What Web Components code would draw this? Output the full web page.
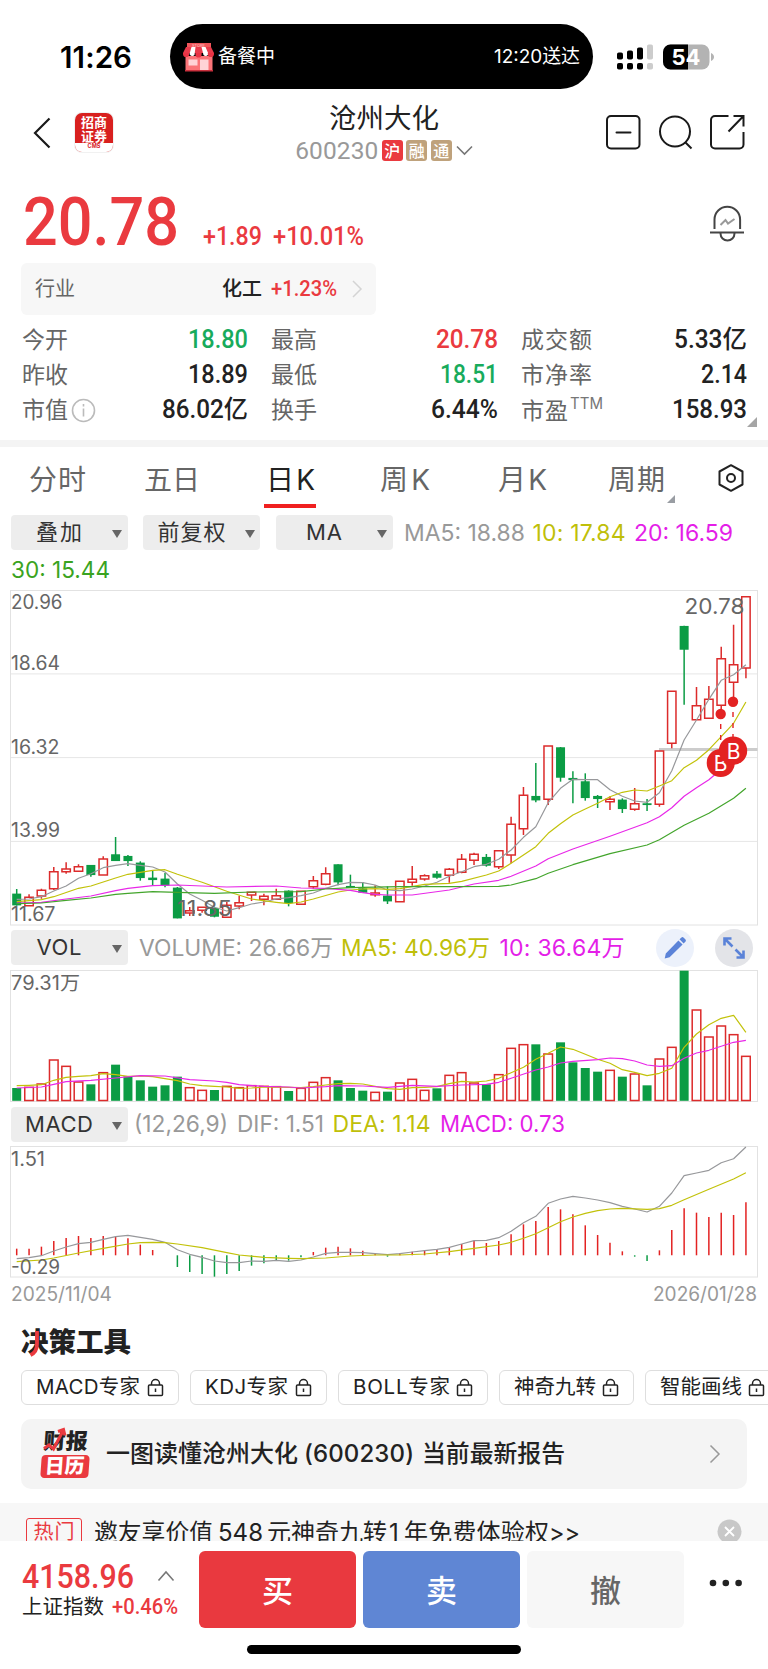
<!DOCTYPE html>
<html lang="zh-CN">
<head>
<meta charset="utf-8">
<title>沧州大化 600230</title>
<style>
    body {
        margin: 0;
        width: 768px;
        height: 1669px;
        overflow: hidden;
        background: #fff;
        color: #222;
        font-family: Inter, "Noto Sans CJK SC", sans-serif;
    }
</style>
</head>
<body>
<stock-app></stock-app>

<script>
const RED = '#ea3a3f';
const GREEN = '#18ab5c';
const UP = '#dc2b2b';
const DOWN = '#0b9c44';
const GREY_LINE = '#97989b';
const YELLOW = '#c2c20a';
const MAGENTA = '#e828e8';
const LEAF = '#43a52c';

class BaseElement extends HTMLElement {
    connectedCallback() {
        if (this.shadowRoot) return;
        this.attachShadow({ mode: 'open' });
        this.shadowRoot.innerHTML = `
            <style>
                * { box-sizing: border-box; }
                svg { display: block; flex: none; }
                .din { font-family: Roboto, "Noto Sans CJK SC", sans-serif; font-weight: 500; }
                ${this.css()}
            </style>
            ${this.html()}
        `;
    }
    css() { return ''; }
    html() { return ''; }
}

// time, live activity island, signal and battery
class StatusBar extends BaseElement {
    css() {
        return `
            :host { display: flex; align-items: center; height: 89px; padding: 24px 0 0 60px; }
            .island {
                display: flex; align-items: center; width: 423px; height: 65px; margin-left: 38px;
                padding: 0 13px; border-radius: 33px; background: #000; color: #fff;
            }
            .signal { margin-left: 23px; }
            .battery { margin-left: 10px; }
        `;
    }
    html() {
        return `
            <fit-text w="72" style="font-size:29.5px;font-weight:600;color:#000;margin-top:2px">11:26</fit-text>
            <div class="island">
                <svg width="31" height="30" viewBox="0 0 31 30">
                    <path d="M4 1h24v8H4z" fill="#f0565b"/>
                    <path d="M2.500 14h27v15h-27z" fill="#fb7478"/>
                    <path d="M3 5h25l3 6H0z" fill="#e83a4a"/>
                    <path d="M8.500 5h4l-1 8a3 3 0 0 1-5-1zM18.500 5h4l3 7a3 3 0 0 1-5 1z" fill="#fff"/>
                    <path d="M0 11h6.200v1a3.100 3.100 0 0 1-6.200 0zM12.400 11h6.200v1.500a3.100 3.100 0 0 1-6.200 0zM24.800 11h6.200v1a3.100 3.100 0 0 1-6.200 0z" fill="#e93244"/>
                    <path d="M5.500 17.500h9v6h-9zM17 17.500h8.500V28H17z" fill="#ffd3d6"/>
                    <path d="M2 28h28v1.500H2z" fill="#c9303d"/>
                    <text x="15.500" y="4.600" font-size="4" fill="#ffc4c6" text-anchor="middle" font-family="Inter">STORE</text>
                </svg>
                <fit-text w="57" style="font-size:19px;margin:1px 0 0 4px">备餐中</fit-text>
                <fit-text w="86" style="font-size:19px;margin:1px 0 0 auto">12:20送达</fit-text>
            </div>
            <svg class="signal" width="37" height="26" viewBox="0 0 37 26">
                <g fill="#000">
                    <rect x="1" y="8.500" width="6" height="7" rx="1.800"/>
                    <rect x="11" y="6.500" width="6" height="9" rx="1.800"/>
                    <rect x="21" y="3.500" width="6" height="12" rx="1.800"/>
                    <rect x="1" y="19" width="6" height="6.500" rx="1.800"/>
                    <rect x="11" y="19" width="6" height="6.500" rx="1.800"/>
                    <rect x="21" y="19" width="6" height="6.500" rx="1.800"/>
                </g>
                <g fill="#ccc">
                    <rect x="31" y="0.500" width="6" height="15" rx="1.800"/>
                    <rect x="31" y="19" width="6" height="6.500" rx="1.800"/>
                </g>
            </svg>
            <svg class="battery" width="52" height="26" viewBox="0 0 52 26">
                <rect y="0.500" width="46.500" height="25" rx="7.500" fill="#b3b3b3"/>
                <path d="M25 .5H7.500a7.500 7.500 0 0 0-7.500 7.500v10a7.500 7.500 0 0 0 7.500 7.500H25z" fill="#000"/>
                <path d="M48 9c4 1.500 4 6.500 0 8z" fill="#b3b3b3"/>
                <text x="23" y="20.700" text-anchor="middle" font-size="22" font-weight="700" fill="#fff" font-family="Inter">54</text>
            </svg>
        `;
    }
}

class NavHeader extends BaseElement {
    css() {
        return `
            :host { display: flex; align-items: center; height: 87px; padding: 0 23px 0 33px; }
            .logo {
                display: flex; flex-direction: column; align-items: center; width: 38px; height: 39px; margin-left: 24px;
                padding-top: 2px; border-radius: 7px; overflow: hidden; background: #d8201f; color: #fff;
                font: 700 13px/14px "Noto Sans CJK SC", sans-serif; box-shadow: 0 0 0 1px #f1f1f1;
            }
            .logo span { height: 14.500px; }
            .logo small { width: 38px; height: 10px; background: #fff; color: #d8201f; font: 700 5.500px/7px Inter, sans-serif; text-align: center; }
            .title { display: flex; flex-direction: column; align-items: center; width: 180px; margin-left: 181px; gap: 5px; }
            .code { display: flex; align-items: center; height: 22px; }
            .badge { width: 21px; height: 21px; margin-left: 3.500px; border-radius: 3px; color: #fff; font: 500 16px/21px "Noto Sans CJK SC", sans-serif; text-align: center; }
            .tools { display: flex; gap: 17.500px; margin-left: auto; }
        `;
    }
    html() {
        return `
            <svg width="18" height="32" viewBox="0 0 18 32" fill="none" stroke="#1a1a1a" stroke-width="2.200"><path d="M16.500 1.500 2 16l14.500 14.500"/></svg>
            <div class="logo"><span>招商</span><span>证券</span><small>CMS</small></div>
            <div class="title">
                <fit-text w="110" style="font-size:27.500px">沧州大化</fit-text>
                <div class="code">
                    <fit-text class="din" w="83" style="font-size:24.500px;color:#999;font-weight:400">600230</fit-text>
                    <span class="badge" style="background:${RED}">沪</span>
                    <span class="badge" style="background:#bfa27c">融</span>
                    <span class="badge" style="background:#bfa27c">通</span>
                    <svg width="17" height="11" viewBox="0 0 17 11" fill="none" stroke="#777" stroke-width="1.600" style="margin-left:4px"><path d="m1 1.500 7.500 7.500L16 1.500"/></svg>
                </div>
            </div>
            <div class="tools">
                <svg width="35" height="35" viewBox="0 0 35 35" fill="none" stroke="#1a1a1a" stroke-width="2"><rect x="1" y="1" width="32.500" height="32.500" rx="4"/><path d="M10.500 17.500h14" stroke-linecap="round"/></svg>
                <svg width="34" height="35" viewBox="0 0 34 35" fill="none" stroke="#1a1a1a" stroke-width="2"><circle cx="16" cy="16.500" r="15"/><path d="m26 27 6.500 6.500"/></svg>
                <svg width="35" height="35" viewBox="0 0 35 35" fill="none" stroke="#1a1a1a" stroke-width="2"><path d="M18.500 1H5a4 4 0 0 0-4 4v24.500a4 4 0 0 0 4 4h24.500a4 4 0 0 0 4-4V17"/><path d="M23.500 1h10v10.500M33 1.500 18.500 16.500"/></svg>
            </div>
        `;
    }
}

class PriceHead extends BaseElement {
    css() {
        return `
            :host { display: block; padding: 9px 23px 0 23px; height: 138px; color: ${RED}; }
            .price { display: flex; align-items: baseline; height: 77.500px; }
            .price svg { align-self: flex-start; margin: 20px 0 0 auto; }
            .industry { display: flex; align-items: center; width: 355px; height: 52px; margin-left: -2px; padding: 1px 13px 0 14px; border-radius: 6px; background: #f7f7f7; }
        `;
    }
    html() {
        return `
            <div class="price din">
                <fit-text w="156" style="font-size:66px">20.78</fit-text>
                <fit-text w="59" style="font-size:25px;margin-left:24px">+1.89</fit-text>
                <fit-text w="91" style="font-size:25px;margin-left:11px">+10.01%</fit-text>
                <svg width="36" height="37" viewBox="0 0 36 37" fill="none" stroke="#444" stroke-width="2">
                    <path d="M5.500 24V14.500a12.800 12.800 0 0 1 25.600 0V24M1 27.500h34M11.500 28.500a7 7 0 0 0 14 0"/>
                    <path d="m11.500 20 5-5 2.500 3.500L25.500 14" stroke="#999"/>
                </svg>
            </div>
            <div class="industry">
                <fit-text w="40" style="font-size:20px;color:#666">行业</fit-text>
                <fit-text w="40" style="font-size:20px;color:#222;margin-left:auto;font-weight:500">化工</fit-text>
                <fit-text class="din" w="66" style="font-size:22px;margin-left:9px">+1.23%</fit-text>
                <svg width="11" height="18" viewBox="0 0 11 18" fill="none" stroke="#d4d4d4" stroke-width="1.500" style="margin-left:15px"><path d="m1 1 8 8-8 8"/></svg>
            </div>
        `;
    }
}

class QuoteStats extends BaseElement {
    css() {
        return `
            :host { display: grid; grid-template-columns: 226px 227px 226px; grid-auto-rows: 35px; column-gap: 23px;
                box-sizing: border-box; padding: 8.500px 0 0 22px; height: 126px; }
            .cell { display: flex; align-items: center; position: relative; }
            .val { margin-left: auto; }
            sup { position: absolute; left: 49px; top: 1px; font-size: 16px; line-height: 16px; color: #777; }
            .corner { position: absolute; right: -10px; bottom: 1px; border: 5px solid #a5a5a5; border-left-color: transparent; border-top-color: transparent; }
        `;
    }
    html() {
        const info = '<svg width="25" height="25" viewBox="0 0 25 25" fill="none" stroke="#bbb" stroke-width="1.600" style="margin-left:3px"><circle cx="12.500" cy="12.500" r="11"/><path d="M12.500 10.500v8M12.500 6v2.500"/></svg>';
        const rows = [
            ['今开', 46, '18.80', 60, GREEN], ['最高', 46, '20.78', 62, RED], ['成交额', 71, '5.33亿', 73],
            ['昨收', 46, '18.89', 60], ['最低', 46, '18.51', 58, GREEN], ['市净率', 71, '2.14', 46],
            ['市值', 46, '86.02亿', 86, '', info], ['换手', 46, '6.44%', 67], ['市盈', 47, '158.93', 75, '', '<sup><fit-text w="33">TTM</fit-text></sup><i class="corner"></i>']
        ];
        return rows.map(([label, lw, value, vw, color, extra]) => `
            <div class="cell">
                <fit-text w="${lw}" style="font-size:23px;color:#666;${label === '市盈' ? 'margin-top:3px' : ''}">${label}</fit-text>${extra || ''}
                <fit-text class="din val" w="${vw}" style="font-size:25px;color:${color || '#222'}">${value}</fit-text>
            </div>`).join('');
    }
}

class PeriodTabs extends BaseElement {
    css() {
        return `
            :host { display: flex; align-items: center; height: 71px; padding-left: 29px; border-top: 7px solid #f4f4f4; color: #666; box-sizing: border-box; }
            .tab { display: flex; align-items: center; position: relative; height: 64px; padding-top: 2px; font-size: 28px; }
            .tab.on { color: #222; }
            .tab.on::after { content: ""; position: absolute; left: -2px; right: -1px; bottom: 3px; height: 4px; background: #f02020; }
            .corner { position: absolute; right: -10px; bottom: 8px; border: 4px solid #999da3; border-left-color: transparent; border-top-color: transparent; }
        `;
    }
    html() {
        const tabs = [['分时', 57, 0], ['五日', 56, 58], ['日K', 49, 66], ['周K', 50, 65], ['月K', 49, 68], ['周期', 57, 61]];
        return tabs.map(([label, w, gap], i) => `
            <span class="tab ${i === 2 ? 'on' : ''}" style="margin-left:${gap}px">
                <fit-text w="${w}">${label}</fit-text>${i === 5 ? '<i class="corner"></i>' : ''}
            </span>`).join('') + `
            <svg width="26" height="28" viewBox="0 0 26 28" fill="none" stroke="#222" stroke-width="2" style="margin:-3px 0 0 53px">
                <path d="M13 1.200 24.500 7.500v13L13 26.800 1.500 20.500v-13z" stroke-linejoin="round"/><circle cx="13" cy="14" r="4"/>
            </svg>`;
    }
}

class DropButton extends BaseElement {
    css() {
        return `
            :host { display: flex; align-items: center; justify-content: center; position: relative; flex: none;
                width: 117px; height: 35px; padding: 1px 20px 0 0; box-sizing: border-box; border-radius: 4px;
                background: #ededed; color: #333; font-size: 22px; }
            i { position: absolute; right: 5.500px; top: 15px; border: 5.500px solid transparent; border-top: 8px solid #666; border-bottom: 0; }
        `;
    }
    html() { return '<slot></slot><i></i>'; }
}

// drop button(s) followed by coloured values
class IndicatorRow extends BaseElement {
    css() {
        return `
            :host { display: flex; align-items: center; height: 35px; padding-left: 10.500px; font-size: 23px; }
        `;
    }
    html() { return '<slot></slot>'; }
}

const STEP = 12.36;
const xAt = i => 16.7 + i * STEP;

// [index, value] pairs to a polyline, value -> y by the chart's own scale
const line = (pts, y, color) =>
    `<polyline fill="none" stroke="${color}" stroke-width="1.200" stroke-linejoin="round" points="${pts.map(([i, v]) => xAt(i).toFixed(1) + ',' + y(v).toFixed(1)).join(' ')}"/>`;

const dense = values => values.map((v, i) => [i, v]);

// direction, high, body top, body bottom, low
const CANDLES = [
    ['G',927,942,975,977],['R',943,952,977,979],['R',926,931,948,956],['R',861,875,926,930],['R',847,867,875,881],
    ['R',853,860,874,875],['G',855,856,884,890],['R',829,837,885,887],['G',771,824,842,843],['G',825,829,842,858],
    ['G',844,849,893,902],['G',872,894,899,915],['G',879,897,916,922],['G',921,924,1014,1015],['R',981,992,999,1008],
    ['R',980,982,991,998],['G',982,985,1009,1012],['R',966,976,1012,1014],['R',947,968,978,988],['R',935,937,945,963],
    ['R',941,949,958,976],['R',926,947,958,960],['G',931,933,968,979],['R',933,934,973,974],['R',888,902,920,926],
    ['R',862,881,913,916],['G',853,854,906,916],['G',884,919,923,924],['G',906,926,937,938],['R',916,939,944,950],
    ['G',919,948,963,972],['R',903,904,965,966],['R',858,898,907,917],['R',883,887,897,902],['G',873,882,892,896],
    ['R',864,868,886,908],['R',822,838,877,880],['R',818,823,841,855],['G',822,832,856,860],['R',811,812,860,867],
    ['R',710,733,825,850],['R',621,646,746,765],['G',549,649,660,667],['R',496,498,658,675],['G',501,503,592,605],
    ['G',574,595,599,670],['G',580,605,653,662],['G',645,649,656,684],['R',649,658,665,690],['G',655,660,686,699],
    ['R',624,671,688,692],['G',657,671,674,693],['R',511,513,673,680],['R',332,334,490,505],['G',137,139,208,374],
    ['R',321,377,419,420],['R',318,358,415,416],['R',200,236,376,395],['R',134,254,307,355],['R',48,50,264,295]
];

class KlineChart extends BaseElement {
    css() { return ':host { display: block; height: 345px; }'; }
    html() {
        const y = v => 580 + v / 3;
        const ma5 = dense([958,957,950,933,918,895,881,863,856,851,856,861,876,912,942,961,982,993,983,972,966,957,953,947,939,925,914,907,908,915,930,932,927,918,907,889,875,860,853,838,810,772,740,668,625,598,599,599,629,649,663,667,638,572,480,420,358,301,284,254]);
        const ma10 = [[0,965],[2,959],[3,950],[5,925],[6,918],[8,894],[9,883],[10,877],[11,871],[12,869],[13,883],[15,907],[17,934],[19,957],[21,967],[22,971],[23,966],[24,957],[26,936],[27,930],[28,927],[29,926],[30,928],[31,926],[33,913],[35,910],[36,904],[38,885],[39,873],[40,850],[42,800],[43,760],[44,731],[45,705],[46,687],[47,670],[48,650],[49,637],[50,630],[51,633],[52,618],[53,602],[54,563],[55,541],[56,509],[57,470],[58,430],[59,366]];
        const ma20 = [[0,969],[2,967],[4,957],[6,948],[8,932],[9,925],[11,917],[13,915],[17,921],[21,918],[23,924],[25,925],[27,931],[28,938],[29,943],[30,945],[32,945],[35,930],[37,912],[39,901],[40,889],[42,858],[43,836],[45,807],[48,769],[51,728],[52,710],[53,683],[54,649],[55,623],[56,599],[57,568],[58,530]];
        const ma30 = [[0,971],[2,969],[4,961],[6,954],[8,943],[9,940],[11,935],[13,937],[16,940],[19,936],[23,935],[25,927],[27,923],[31,920],[35,920],[39,919],[40,915],[42,896],[43,880],[45,854],[48,821],[51,795],[52,779],[54,736],[56,700],[58,655],[59,625]];
        const candles = CANDLES.map(([dir, hi, top, bottom, lo], i) => {
            const x = xAt(i);
            const t = y(top), b = y(bottom);
            if (dir === 'G') {
                return `<path d="M${x} ${y(hi)}V${y(lo)}" stroke="${DOWN}" stroke-width="1.500"/><rect x="${x - 4.5}" y="${t - .4}" width="9" height="${b - t + .8}" fill="${DOWN}"/>`;
            }
            return `<path d="M${x} ${y(hi)}V${t}M${x} ${b}V${y(lo)}M${x - 4.2} ${t}h8.400V${b}h-8.400z" fill="none" stroke="${UP}" stroke-width="1.500"/>`;
        }).join('');
        const labels = [['20.96', 609, 51.5], ['18.64', 670, 49], ['16.32', 754, 48.5], ['13.99', 837.3, 49], ['11.67', 921.3, 44.5]];
        return `
            <svg width="768" height="345" viewBox="0 585 768 345" font-family="Inter, sans-serif">
                <path d="M10.500 673.900H757.500M10.500 757.600H757.500M10.500 841.400H757.500" stroke="#e6e6e6"/>
                <rect x="10.500" y="590.500" width="747" height="334.500" fill="none" stroke="#e2e2e2"/>
                <path d="M659 749.500H757.500" stroke="#ccc" stroke-width="2.800"/>
                ${candles}
                ${line(ma5, y, GREY_LINE)}${line(ma10, y, YELLOW)}${line(ma20, y, MAGENTA)}${line(ma30, y, LEAF)}
                ${labels.map(([t, ly, w]) => `<text x="11" y="${ly}" font-size="19.500" fill="#666" textLength="${w}" lengthAdjust="spacingAndGlyphs">${t}</text>`).join('')}
                <text x="177" y="915.700" font-size="21.500" fill="#666" textLength="55" lengthAdjust="spacingAndGlyphs">11.85</text>
                <text x="684.500" y="614.400" font-size="21.500" fill="#666" textLength="60" lengthAdjust="spacingAndGlyphs">20.78</text>
                <g stroke="#e32222" stroke-width="1.400" stroke-dasharray="5 6">
                    <path d="M720.700 724V748M733 712V740"/>
                </g>
                <g fill="#e32222">
                    <circle cx="720.700" cy="714" r="5.200"/><circle cx="733" cy="701.800" r="5.200"/>
                    <circle cx="720.700" cy="763" r="14"/>
                    <text x="720.700" y="771" text-anchor="middle" font-size="21" fill="#fff">B</text>
                    <circle cx="733" cy="750.700" r="14.200"/>
                    <text x="733.500" y="758.700" text-anchor="middle" font-size="21" fill="#fff">B</text>
                </g>
            </svg>
        `;
    }
}

class VolumeChart extends BaseElement {
    css() { return ':host { display: block; height: 142px; }'; }
    html() {
        const y = v => 925 + v / 3;
        const tops = [489,487,477,405,424,471,478,443,419,454,466,485,481,455,488,496,495,484,488,482,484,485,498,490,472,458,466,489,497,502,500,474,463,496,490,451,443,474,478,449,370,359,358,387,352,412,429,440,436,455,447,481,402,367,137,255,336,303,329,394];
        const ma5 = [[0,482],[1,481],[2,479],[3,466],[4,457],[5,454],[6,452],[7,446],[8,449],[9,454],[10,453],[11,455],[12,461],[13,467],[14,477],[15,482],[16,484],[17,486],[18,490],[19,489],[20,486],[22,487],[23,488],[24,485],[25,480],[26,476],[27,475],[28,477],[29,484],[30,491],[31,493],[32,488],[33,487],[34,485],[35,476],[36,469],[37,471],[38,468],[39,460],[40,443],[41,427],[42,403],[43,385],[44,366],[45,373],[46,388],[47,403],[48,415],[49,434],[50,442],[51,452],[52,445],[53,430],[54,367],[55,327],[56,299],[57,280],[58,271],[59,322]];
        const ma10 = [[0,489],[2,486],[3,478],[4,470],[6,466],[8,459],[10,452],[12,453],[14,464],[16,468],[17,472],[18,479],[20,484],[22,486],[23,489],[25,485],[26,482],[28,483],[30,487],[32,481],[34,484],[36,480],[38,478],[39,472],[40,460],[42,435],[43,426],[44,414],[45,409],[47,404],[48,399],[49,401],[50,408],[51,420],[52,424],[53,422],[54,400],[55,384],[56,376],[57,364],[58,352],[59,346]];
        const bars = tops.map((v, i) => {
            const x = xAt(i);
            return CANDLES[i][0] === 'G'
                ? `<rect x="${x - 4.5}" y="${y(v)}" width="9" height="${1100.8 - y(v)}" fill="${DOWN}"/>`
                : `<rect x="${x - 4.3}" y="${y(v)}" width="8.600" height="${1100.5 - y(v)}" fill="none" stroke="${UP}" stroke-width="1.500"/>`;
        }).join('');
        return `
            <svg width="768" height="142" viewBox="0 965 768 142" font-family="Inter, 'Noto Sans CJK SC', sans-serif">
                <rect x="10.500" y="970.500" width="747" height="131" fill="none" stroke="#e2e2e2"/>
                ${bars}${line(ma5, y, YELLOW)}${line(ma10, y, MAGENTA)}
                <text x="11" y="990" font-size="19.500" fill="#666" textLength="69" lengthAdjust="spacingAndGlyphs">79.31万</text>
            </svg>
        `;
    }
}

class MacdChart extends BaseElement {
    css() { return ':host { display: block; height: 139px; }'; }
    html() {
        const y = v => 1105 + v / 3;
        const tips = [431,431,425,408,399,393,399,393,396,400,419,435,451,486,501,507,515,507,498,482,475,466,467,457,441,428,425,430,437,444,455,445,440,435,432,426,417,408,414,408,388,358,348,306,313,328,361,390,413,439,455,468,436,375,310,323,336,323,330,292];
        const dif = dense([461,458,452,438,426,416,412,403,395,391,397,403,412,434,448,457,468,473,473,468,469,466,469,465,456,445,442,442,443,446,449,446,441,437,433,427,417,407,406,398,379,353,334,295,282,274,279,285,293,304,312,321,304,264,212,204,196,173,161,126]);
        const dea = [[0,470],[2,465],[3,459],[5,444],[7,430],[9,417],[10,413],[11,412],[12,413],[13,417],[15,428],[17,443],[18,450],[20,457],[22,460],[23,461],[25,459],[27,453],[29,450],[31,450],[33,447],[35,440],[37,430],[39,420],[40,412],[41,400],[42,386],[43,368],[44,350],[45,336],[46,325],[47,317],[48,312],[49,310],[51,313],[52,311],[53,301],[54,284],[56,253],[58,222],[59,203]];
        const bars = tips.map((v, i) => `<path d="M${xAt(i)} 1255.300V${y(v)}" stroke="${v > 451 ? DOWN : '#e32222'}" stroke-width="1.500"/>`).join('');
        return `
            <svg width="768" height="139" viewBox="0 1141 768 139" font-family="Inter, sans-serif">
                <rect x="10.500" y="1146.500" width="747" height="130.500" fill="none" stroke="#e2e2e2"/>
                ${bars}${line(dif, y, GREY_LINE)}${line(dea, y, YELLOW)}
                <text x="11" y="1165.800" font-size="19.500" fill="#666" textLength="34" lengthAdjust="spacingAndGlyphs">1.51</text>
                <text x="11" y="1274.200" font-size="19.500" fill="#666" textLength="49" lengthAdjust="spacingAndGlyphs">-0.29</text>
            </svg>
        `;
    }
}

class RoundTool extends BaseElement {
    css() {
        return `:host { display: flex; align-items: center; justify-content: center; flex: none; width: 38px; height: 38px; border-radius: 50%; }`;
    }
    html() {
        return this.getAttribute('kind') === 'pen'
            ? `<svg width="22" height="22" viewBox="0 0 22 22" fill="#5b83d8"><path d="m15.500 2.300 1.700-1.600a1.800 1.800 0 0 1 2.500 0l1.600 1.600a1.800 1.800 0 0 1 0 2.500l-1.700 1.700zM14.400 3.400l4.200 4.200L5.600 20.300l-4.900 1.200 1.100-5z"/></svg>`
            : `<svg width="24" height="24" viewBox="0 0 24 24" fill="none" stroke="#5b83d8" stroke-width="2.600"><path d="M2.500 9.500V2.500H9.500M3 3l7.500 7.500M21.500 14.500v7H14.500M21 21l-7.500-7.500"/></svg>`;
    }
}

class ToolChips extends BaseElement {
    css() {
        return `
            :host { display: block; height: 112px; padding-left: 21px; box-sizing: border-box; }
            h2 { position: relative; display: flex; align-items: center; margin: 0; height: 62.500px; padding-top: 10px; font-size: 27.500px; font-weight: 900; }
            h2 svg { position: absolute; left: 8px; top: 22px; }
            .row { display: flex; gap: 11px; width: 800px; }
            .chip { display: flex; align-items: center; justify-content: space-between; flex: none; height: 35px; padding: 0 14px; border: 1.500px solid #dedede; border-radius: 6px; font-size: 20.500px; }
        `;
    }
    html() {
        const chips = [['MACD专家', 158, 104], ['KDJ专家', 137, 83], ['BOLL专家', 150, 97], ['神奇九转', 135, 82], ['智能画线', 135, 82]];
        const lock = '<svg width="17" height="19" viewBox="0 0 17 19" fill="none" stroke="#222" stroke-width="1.500"><rect x="1.500" y="7" width="14" height="10.500" rx="1"/><path d="M4.500 7V5.500a4 4 0 0 1 8 0V7M8.500 10.500v3.500"/></svg>';
        return `
            <h2>
                <fit-text w="110">决策工具</fit-text>
                <svg width="16" height="29" viewBox="0 0 16 29" fill="none" stroke="${RED}" stroke-width="3.800"><path d="M8 2v13c0 6-2 9-6.500 11"/></svg>
            </h2>
            <div class="row">
                ${chips.map(([t, w, tw]) => `<span class="chip" style="width:${w}px"><fit-text w="${tw}">${t}</fit-text>${lock}</span>`).join('')}
            </div>
        `;
    }
}

class ReportCard extends BaseElement {
    css() {
        return `
            :host { display: flex; align-items: center; width: 726px; height: 69.500px; margin-left: 21px; padding: 0 26px 0 20px; box-sizing: border-box; border-radius: 10px; background: #f4f4f4; font-size: 24px; font-weight: 500; }
            .cal { position: relative; width: 51px; font-size: 22px; font-weight: 900; margin-right: 14px; line-height: 24px; }
            .cal div { transform: skewX(-4deg); height: 23px; display: flex; align-items: center; justify-content: center; }
            .cal .on { width: 48px; color: #fff; background: ${RED}; border-radius: 4px; margin-top: 2px; }
            .cal svg { position: absolute; left: 1px; top: -3px; }
        `;
    }
    html() {
        return `
            <div class="cal">
                <div><fit-text w="46">财报</fit-text></div>
                <div class="on"><fit-text w="41" style="font-size:20px">日历</fit-text></div>
                <svg width="25" height="25" viewBox="0 0 25 25" fill="none" stroke="${RED}" stroke-width="3"><path d="M2 21.500 7 18l4.500 4L21 4M16 4.500l5.500-2 1.500 6"/></svg>
            </div>
            <fit-text w="192">一图读懂沧州大化</fit-text>
            <fit-text w="110" style="margin-left:6px">(600230)</fit-text>
            <fit-text w="143" style="margin-left:8px">当前最新报告</fit-text>
            <svg width="12" height="20" viewBox="0 0 12 20" fill="none" stroke="#999" stroke-width="1.500" style="margin-left:auto"><path d="m1.500 1.500 8.500 8.500-8.500 8.500"/></svg>
        `;
    }
}

// promo strip, its lower part is cut by the trade bar
class PromoStrip extends BaseElement {
    css() {
        return `
            :host { display: flex; align-items: flex-start; height: 38.500px; margin-top: 14px; padding: 15.500px 26px 0 26px; box-sizing: border-box; overflow: hidden; background: #f7f7f7; }
            .tag { display: flex; align-items: center; justify-content: center; flex: none; width: 56px; height: 29px; border: 1.500px solid ${RED}; border-radius: 3px; color: ${RED}; font-size: 20px; }
            .msg { display: flex; align-items: center; height: 29px; margin-left: 12px; font-size: 24px; }
        `;
    }
    html() {
        return `
            <span class="tag"><fit-text w="41">热门</fit-text></span>
            <span class="msg">
                <fit-text w="119">邀友享价值</fit-text>
                <fit-text w="45" style="margin-left:5px">548</fit-text>
                <fit-text w="120" style="margin-left:4px">元神奇九转</fit-text>
                <fit-text w="12" style="margin-left:2px">1</fit-text>
                <fit-text w="145" style="margin-left:3px">年免费体验权</fit-text>
                <fit-text w="31">&gt;&gt;</fit-text>
            </span>
            <svg width="25" height="25" viewBox="0 0 25 25" style="margin:1px 0 0 auto"><circle cx="12.500" cy="12.500" r="12" fill="#c8c8c8"/><path d="m8 8 9 9m0-9-9 9" stroke="#fff" stroke-width="1.800"/></svg>
        `;
    }
}

class TradeBar extends BaseElement {
    css() {
        return `
            :host { display: block; height: 128px; background: #fff; }
            .row { display: flex; padding: 10px 25px 0 22px; }
            .index { width: 177px; padding-top: 5px; color: ${RED}; }
            .index div { display: flex; align-items: center; height: 41px; }
            .index div + div { height: 20px; }
            .btn { display: flex; align-items: center; justify-content: center; width: 157px; height: 77px; padding-bottom: 2px; margin-right: 7px; border-radius: 6px; color: #fff; font-size: 31px; font-weight: 500; }
            .home { width: 274px; height: 9px; margin: 17px auto 0; border-radius: 5px; background: #000; }
        `;
    }
    html() {
        return `
            <div class="row">
                <div class="index">
                    <div>
                        <fit-text class="din" w="112" style="font-size:34px">4158.96</fit-text>
                        <svg width="18" height="12" viewBox="0 0 18 12" fill="none" stroke="#777" stroke-width="1.600" style="margin:-2px 0 0 23px"><path d="m1.500 10.500 7.500-8.500 7.500 8.500"/></svg>
                    </div>
                    <div>
                        <fit-text w="82" style="font-size:20.500px;color:#222">上证指数</fit-text>
                        <fit-text class="din" w="66" style="font-size:21.500px;margin-left:8px">+0.46%</fit-text>
                    </div>
                </div>
                <span class="btn" style="background:#e9393f">买</span>
                <span class="btn" style="background:#5f86d4">卖</span>
                <span class="btn" style="background:#f7f7f7;color:#666">撤</span>
                <svg width="33" height="8" viewBox="0 0 33 8" fill="#222" style="margin:28px 0 0 18px"><circle cx="4" cy="4" r="3.300"/><circle cx="16.800" cy="4" r="3.300"/><circle cx="29.600" cy="4" r="3.300"/></svg>
            </div>
            <div class="home"></div>
        `;
    }
}

class StockApp extends BaseElement {
    css() {
        return `
            :host { display: flex; flex-direction: column; width: 768px; height: 1669px; overflow: hidden; }
            :host > *, .dates { flex: none; }
            .dates { display: flex; justify-content: space-between; align-items: center; height: 27px; padding: 1px 11px 0; font-size: 19.500px; color: #999; }
        `;
    }
    html() {
        const txt = (t, w, gap, color) => `<fit-text w="${w}" style="margin:1px 0 0 ${gap}px;color:${color}">${t}</fit-text>`;
        return `
            <status-bar></status-bar>
            <nav-header></nav-header>
            <price-head style="box-sizing:border-box"></price-head>
            <quote-stats></quote-stats>
            <period-tabs></period-tabs>
            <indicator-row style="margin-top:4px">
                <drop-button style="margin-right:15.500px"><fit-text w="46">叠加</fit-text></drop-button>
                <drop-button style="margin-right:15.500px"><fit-text w="68">前复权</fit-text></drop-button>
                <drop-button><fit-text w="36">MA</fit-text></drop-button>
                ${txt('MA5: 18.88', 121, 11, '#999')}
                ${txt('10: 17.84', 93, 8, '#bfbf0a')}
                ${txt('20: 16.59', 99, 8, '#e41ee8')}
            </indicator-row>
            <indicator-row style="box-sizing:border-box;padding-top:4px">${txt('30: 15.44', 99, 0, '#3aa321')}</indicator-row>
            <kline-chart></kline-chart>
            <indicator-row>
                <drop-button><fit-text w="45">VOL</fit-text></drop-button>
                ${txt('VOLUME: 26.66万', 194, 11, '#999')}
                ${txt('MA5: 40.96万', 149, 8, '#bfbf0a')}
                ${txt('10: 36.64万', 125, 10, '#e41ee8')}
                <round-tool kind="pen" style="background:#ecf1fb;margin-left:31px"></round-tool>
                <round-tool kind="expand" style="background:#e3e4e8;margin-left:21px"></round-tool>
            </indicator-row>
            <volume-chart></volume-chart>
            <indicator-row style="height:34px">
                <drop-button><fit-text w="68">MACD</fit-text></drop-button>
                ${txt('(12,26,9)', 94, 6, '#999')}
                ${txt('DIF: 1.51', 87, 9, '#999')}
                ${txt('DEA: 1.14', 98, 9, '#bfbf0a')}
                ${txt('MACD: 0.73', 125, 9, '#e41ee8')}
            </indicator-row>
            <macd-chart></macd-chart>
            <div class="dates"><fit-text w="101">2025/11/04</fit-text><fit-text w="104">2026/01/28</fit-text></div>
            <tool-chips></tool-chips>
            <report-card></report-card>
            <promo-strip></promo-strip>
            <trade-bar></trade-bar>
        `;
    }
}

// one line of text that takes exactly w pixels: tracked out when short, condensed when long
class FitText extends HTMLElement {
    connectedCallback() {
        if (this.shadowRoot) return;
        this.attachShadow({ mode: 'open' });
        this.shadowRoot.innerHTML = `
            <style>
                :host { display: block; flex: none; line-height: 1.15; white-space: nowrap; }
                span { display: inline-block; transform-origin: left; }
            </style>
            <span><slot></slot></span>
        `;
        const span = this.shadowRoot.querySelector('span');
        const width = parseFloat(this.getAttribute('w'));
        const count = Array.from(this.textContent).length;
        const natural = span.getBoundingClientRect().width;
        if (natural > width) {
            span.style.transform = `scaleX(${width / natural})`;
        } else if (count > 1) {
            span.style.letterSpacing = (width - natural) / (count - 1) + 'px';
        }
        this.style.width = width + 'px';
    }
}

customElements.define('stock-app', StockApp);
customElements.define('status-bar', StatusBar);
customElements.define('nav-header', NavHeader);
customElements.define('price-head', PriceHead);
customElements.define('quote-stats', QuoteStats);
customElements.define('period-tabs', PeriodTabs);
customElements.define('indicator-row', IndicatorRow);
customElements.define('drop-button', DropButton);
customElements.define('round-tool', RoundTool);
customElements.define('kline-chart', KlineChart);
customElements.define('volume-chart', VolumeChart);
customElements.define('macd-chart', MacdChart);
customElements.define('tool-chips', ToolChips);
customElements.define('report-card', ReportCard);
customElements.define('promo-strip', PromoStrip);
customElements.define('trade-bar', TradeBar);
customElements.define('fit-text', FitText);
</script>
</body>
</html>
